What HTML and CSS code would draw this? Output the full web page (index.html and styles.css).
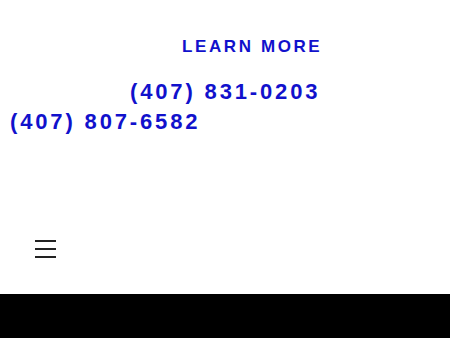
FILE: index.html
```html
<!DOCTYPE html>
<html>
<head>
<meta charset="utf-8">
<link rel="stylesheet" href="styles.css">
</head>
<body>
<div class="page">
  <div class="top">
    <a class="learn" href="#">LEARN MORE</a>
    <div class="phone phone-1">(407) 831-0203</div>
    <div class="phone phone-2">(407) 807-6582</div>
  </div>
  <div class="menu">
    <button class="burger" aria-label="Menu">
      <span></span><span></span><span></span>
    </button>
  </div>
  <div class="footer"></div>
</div>
</body>
</html>
```
FILE: styles.css
```css
html, body { margin: 0; padding: 0; background: #fff; }
.page { width: 450px; height: 338px; display: flex; flex-direction: column; overflow: hidden; }
.top { display: flex; flex-direction: column; padding-top: 37px; }
.learn {
  font-family: "Liberation Sans", Arial, sans-serif;
  font-weight: bold;
  font-size: 17px;
  letter-spacing: 2.6px;
  color: #1111cc;
  text-decoration: none;
  margin-left: 182px;
  line-height: 20px;
}
.phone {
  font-family: "Liberation Sans", Arial, sans-serif;
  font-weight: bold;
  font-size: 22px;
  letter-spacing: 2.85px;
  color: #1111cc;
  line-height: 30px;
}
.phone-1 { margin-left: 130px; margin-top: 20px; }
.phone-2 { margin-left: 10px; }
.menu { flex: 1; display: flex; align-items: flex-end; padding: 0 0 36px 35px; }
.burger { width: 21px; height: 18px; padding: 0; border: 0; background: none; display: flex; flex-direction: column; justify-content: space-between; }
.burger span { display: block; height: 2px; background: #222; }
.footer { height: 44px; background: #000; }
```
